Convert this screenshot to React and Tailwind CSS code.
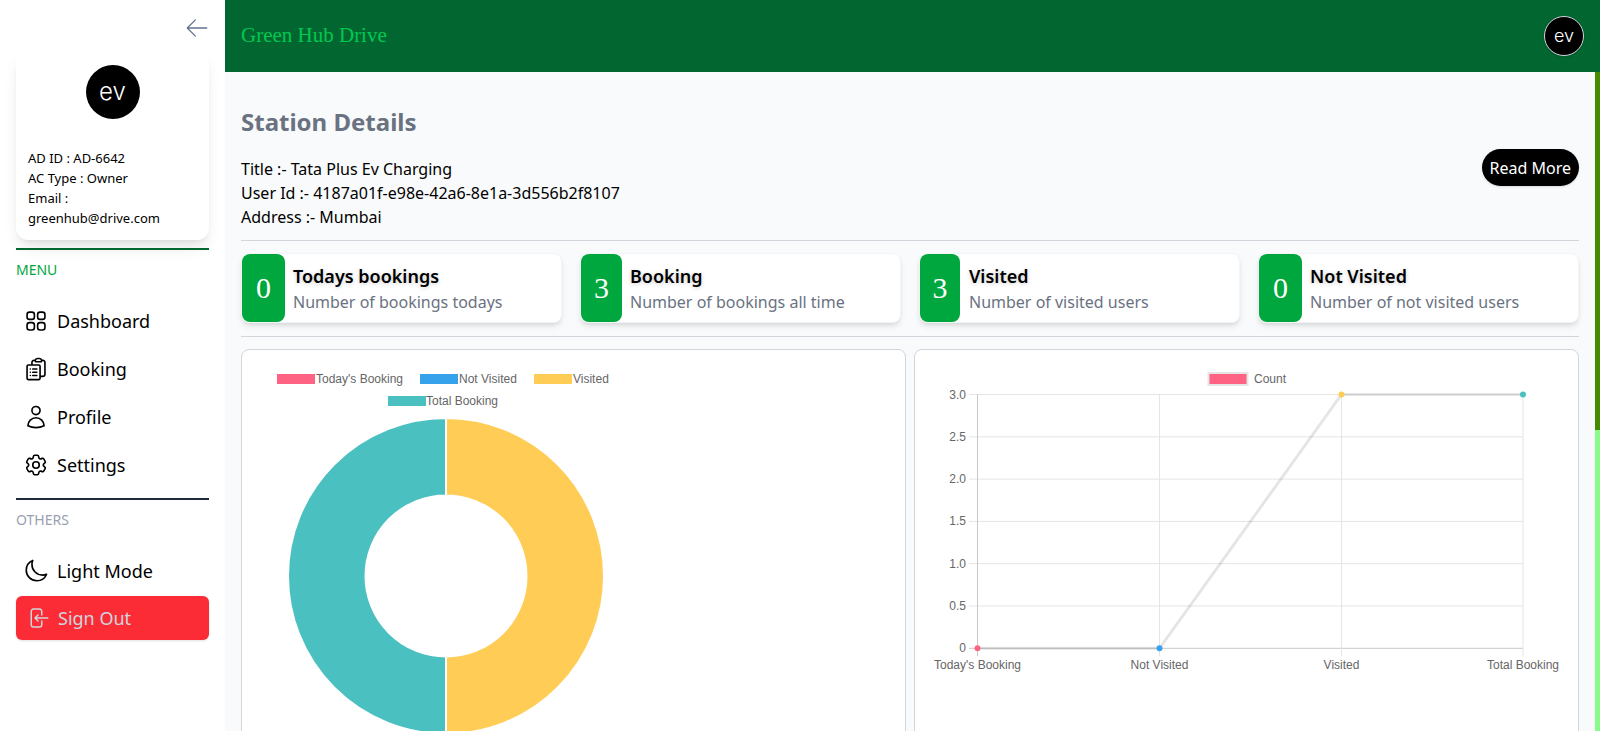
import React from "react";
import {
  HiOutlineArrowLeft,
  HiOutlineSquares2X2,
  HiOutlineClipboardDocumentList,
  HiOutlineUser,
  HiOutlineCog6Tooth,
  HiOutlineMoon,
  HiOutlineArrowLeftEndOnRectangle,
} from "react-icons/hi2";

const menu = [
  ["Dashboard", HiOutlineSquares2X2],
  ["Booking", HiOutlineClipboardDocumentList],
  ["Profile", HiOutlineUser],
  ["Settings", HiOutlineCog6Tooth],
];

const cards = [
  { n: "0", t: "Todays bookings", d: "Number of bookings todays", w: "w-[43px]", g: "gap-2" },
  { n: "3", t: "Booking", d: "Number of bookings all time", w: "w-[41px]", g: "gap-2" },
  { n: "3", t: "Visited", d: "Number of visited users", w: "w-[40px]", g: "gap-[9px]" },
  { n: "0", t: "Not Visited", d: "Number of not visited users", w: "w-[43px]", g: "gap-2" },
];

function Row({ label, Icon }) {
  return (
    <div className="flex h-12 items-center gap-2 pl-[7px] text-lg text-black">
      <Icon size={26} />
      <span>{label}</span>
    </div>
  );
}

function Doughnut() {
  const cx = 204;
  const cy = 226;
  return (
    <svg className="block" width="663" height="420" viewBox="0 0 663 420" style={{ fontFamily: "Liberation Sans, sans-serif" }}>
      {[
        [35, 24, "#ff6384", 81, "Today's Booking"],
        [178, 24, "#36a2eb", 224, "Not Visited"],
        [292, 24, "#ffcd56", 338, "Visited"],
        [146, 46, "#4bc0c0", 191, "Total Booking"],
      ].map(([x, y, c, tx, s]) => (
        <g key={s}>
          <rect x={x} y={y} width="38" height="10" fill={c} />
          <text x={tx - 7} y={y + 9} fontSize="12" fill="#666">{s}</text>
        </g>
      ))}
      <path d={`M${cx} ${cy - 158}A158 158 0 0 0 ${cx} ${cy + 158}L${cx} ${cy + 80.5}A80.5 80.5 0 0 1 ${cx} ${cy - 80.5}Z`} fill="#4bc0c0" stroke="#fff" strokeWidth="2" />
      <path d={`M${cx} ${cy - 158}A158 158 0 0 1 ${cx} ${cy + 158}L${cx} ${cy + 80.5}A80.5 80.5 0 0 0 ${cx} ${cy - 80.5}Z`} fill="#ffcd56" stroke="#fff" strokeWidth="2" />
    </svg>
  );
}

function LineChart() {
  const xs = [62.5, 244.5, 426.5, 608];
  const y = (v) => 44.5 + (3 - v) * 84.6;
  const ticks = [
    [3, "3.0"],
    [2.5, "2.5"],
    [2, "2.0"],
    [1.5, "1.5"],
    [1, "1.0"],
    [0.5, "0.5"],
    [0, "0"],
  ];
  const labels = ["Today's Booking", "Not Visited", "Visited", "Total Booking"];
  const data = [0, 0, 3, 3];
  const colors = ["#ff6384", "#36a2eb", "#ffcd56", "#4bc0c0"];
  return (
    <svg className="block" width="663" height="420" viewBox="0 0 663 420" style={{ fontFamily: "Liberation Sans, sans-serif" }}>
      <rect x="293.5" y="23" width="39" height="12" fill="#ff6384" stroke="#e5e5e5" strokeWidth="2" />
      <text x="339" y="33" fontSize="12" fill="#666">Count</text>
      {ticks.map(([v, s]) => (
        <g key={s}>
          <line x1="54" x2={xs[3]} y1={y(v)} y2={y(v)} stroke={v === 0 ? "#c9c9c9" : "#e5e5e5"} />
          <text x="51" y={y(v) + 4} fontSize="12" fill="#666" textAnchor="end">{s}</text>
        </g>
      ))}
      {xs.map((x, i) => (
        <g key={x}>
          <line x1={x} x2={x} y1="44" y2={y(0) + 8} stroke={i === 0 ? "#c9c9c9" : "#e5e5e5"} />
          <text x={x} y={y(0) + 21} fontSize="12" fill="#666" textAnchor="middle">{labels[i]}</text>
        </g>
      ))}
      <polyline points={xs.map((x, i) => `${x},${y(data[i])}`).join(" ")} fill="none" stroke="rgba(0,0,0,0.1)" strokeWidth="3" />
      {xs.map((x, i) => (
        <circle key={x} cx={x} cy={y(data[i])} r="3" fill={colors[i]} />
      ))}
    </svg>
  );
}

export default function App() {
  return (
    <div className="flex h-screen w-full overflow-hidden bg-white font-['Noto_Sans',sans-serif]">
      <aside className="flex w-[225px] shrink-0 flex-col bg-white px-4 pt-[15px]">
        <div className="-mr-px flex justify-end text-slate-500">
          <HiOutlineArrowLeft size={26} strokeWidth={1.2} />
        </div>
        <div className="mt-[10px] rounded-xl bg-white px-3 pb-3 pt-[14px] shadow-lg">
          <div className="flex justify-center">
            <div className="flex h-[54px] w-[54px] items-center justify-center rounded-full bg-black font-['Inter',sans-serif] text-2xl font-light text-white">
              ev
            </div>
          </div>
          <div className="mt-[29px] text-[13px] leading-5 text-black">
            <div>AD ID : AD-6642</div>
            <div>AC Type : Owner</div>
            <div>Email :</div>
            <div>greenhub@drive.com</div>
          </div>
        </div>
        <div className="mt-2 h-[2px] bg-green-800" />
        <div className="mt-[10px] text-sm leading-5 text-green-600">MENU</div>
        <div className="mt-[17px]">
          {menu.map(([label, Icon]) => (
            <Row key={label} label={label} Icon={Icon} />
          ))}
        </div>
        <div className="mt-[9px] h-[2px] bg-gray-800" />
        <div className="mt-[10px] text-sm leading-5 text-gray-400">OTHERS</div>
        <div className="mt-[17px]">
          <Row label="Light Mode" Icon={HiOutlineMoon} />
        </div>
        <div className="mt-px flex h-11 items-center gap-2 rounded-md bg-red-500 pl-[10px] text-lg text-gray-300 shadow-sm">
          <HiOutlineArrowLeftEndOnRectangle size={24} />
          <span>Sign Out</span>
        </div>
      </aside>

      <div className="flex min-w-0 flex-1 flex-col">
        <header className="flex h-[72px] shrink-0 items-center justify-between bg-green-800 pl-4 pr-4">
          <div className="font-['Liberation_Serif',serif] text-[21px] text-green-500">Green Hub Drive</div>
          <div className="flex h-10 w-10 items-center justify-center rounded-full border border-gray-300 bg-black font-['Inter',sans-serif] text-lg font-light text-white shadow">
            ev
          </div>
        </header>
        <div className="flex min-h-0 flex-1">
          <main className="min-w-0 flex-1 overflow-hidden bg-[#f9fafb] px-4 pt-[34px]">
            <h1 className="text-2xl font-bold leading-8 text-gray-500">Station Details</h1>
            <div className="mt-[11px] flex items-start justify-between">
              <div className="pt-2 text-base leading-6 text-black">
                <div>Title :- Tata Plus Ev Charging</div>
                <div>User Id :- 4187a01f-e98e-42a6-8e1a-3d556b2f8107</div>
                <div>Address :- Mumbai</div>
              </div>
              <button className="h-[37px] rounded-full bg-black px-2 text-base text-white shadow-sm">Read More</button>
            </div>
            <div className="mt-[11px] h-px bg-gray-300" />
            <div className="mt-3 grid grid-cols-4 gap-[18px]">
              {cards.map((c) => (
                <div key={c.t} className={`flex h-[70px] items-stretch rounded-lg border border-gray-100 bg-white shadow-md ${c.g}`}>
                  <div className={`flex shrink-0 items-center justify-center rounded-lg bg-green-600 font-['Liberation_Serif',serif] text-3xl text-white ${c.w}`}>
                    {c.n}
                  </div>
                  <div className="flex flex-col justify-center">
                    <div className="text-lg font-semibold leading-7 text-black [text-shadow:0_1px_4px_rgba(0,0,0,0.2)]">{c.t}</div>
                    <div className="text-base leading-6 text-gray-500">{c.d}</div>
                  </div>
                </div>
              ))}
            </div>
            <div className="mt-[13px] h-px bg-gray-300" />
            <div className="mt-3 grid grid-cols-2 gap-2">
              <div className="h-[420px] overflow-hidden rounded-lg border border-gray-300 bg-white">
                <Doughnut />
              </div>
              <div className="h-[420px] overflow-hidden rounded-lg border border-gray-300 bg-white">
                <LineChart />
              </div>
            </div>
          </main>
          <div className="flex w-[5px] shrink-0 flex-col bg-[#88fb88]">
            <div className="h-[358px] bg-[#458b00]" />
          </div>
        </div>
      </div>
    </div>
  );
}
